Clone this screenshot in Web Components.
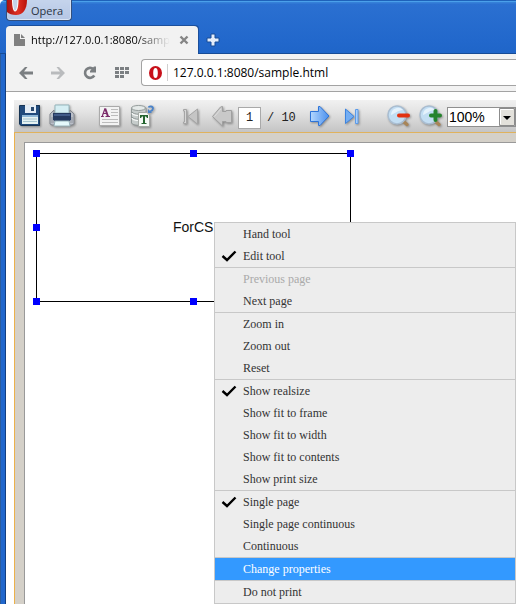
<!DOCTYPE html>
<html lang="en">
<head>
<meta charset="utf-8">
<title>sample.html</title>
<style>
html, body { margin: 0; height: 100%; }
body { font-family: "Open Sans", "Noto Sans", sans-serif; overflow: hidden; background: #fff; }
</style>
</head>
<body>
<browser-window></browser-window>

<template id="browser-window">
<style>
:host { display: flex; flex-direction: column; min-height: 100vh; box-sizing: border-box; position: relative; background: #fff; }
.top { background: linear-gradient(#1e62ba 0 1px, #4aa0ea 1px 2px, #3580d8 2px 3px, #2b70d1 4px, #2268cc 40px, #1f65c8); border-top-left-radius: 5px; }
.body { flex: 1; display: flex; }
.edge { width: 6px; flex: none; background: linear-gradient(90deg, #2b5c9c 0 1px, #2167cc 1px 5px, #123f82 5px); }
.main { flex: 1; min-width: 0; display: flex; flex-direction: column; }
report-viewer { flex: 1; margin: 8px 0 0 8px; }
</style>
<div class="top">
  <opera-button>Opera</opera-button>
  <tab-strip>http://127.0.0.1:8080/sample.html</tab-strip>
</div>
<div class="body">
  <div class="edge"></div>
  <div class="main">
    <address-bar value="127.0.0.1:8080/sample.html"></address-bar>
    <report-viewer></report-viewer>
  </div>
</div>
</template>

<template id="opera-button">
<style>
:host { display: flex; height: 26px; padding-left: 6px; align-items: flex-start; }
button { font: 11px/22px "Open Sans", "Noto Sans", sans-serif; color: #2a3342; height: 21px; padding: 0 8px 0 0; display: flex; gap: 4px; align-items: flex-start; margin: 0; border: 1px solid #33507e; border-top: 0; border-radius: 0 0 4px 4px; background: linear-gradient(#c5d4ec, #b5c6e4); box-shadow: inset 0 -1px #dce6f5, inset -1px 0 #d5e0f2; overflow: hidden; }
svg { display: block; }
</style>
<button type="button">
  <svg width="20" height="17" viewBox="0 0 20 17"><defs><linearGradient id="g" x1="0" x2="1"><stop offset="0" stop-color="#a81410"/><stop offset=".55" stop-color="#e03024"/><stop offset="1" stop-color="#b8120c"/></linearGradient></defs><path d="M0 0H20C20 9 16 15 9 15C5 15 2 14 0 12Z" fill="url(#g)"/><path d="M5 0C5 6 6 11.500 8 11.500C10.500 11.500 11.500 6 11.500 0Z" fill="#fff"/><path d="M6 0C6 6 7 10.500 8 10.500C9.500 10.500 10.500 6 10.500 0Z" fill="#c4d2e9"/></svg>
  <slot></slot>
</button>
</template>

<template id="tab-strip">
<style>
:host { display: flex; height: 27px; padding-left: 6px; border-bottom: 1px solid #164b96; align-items: stretch; }
.tab { display: flex; align-items: center; width: 192px; margin-bottom: -1px; background: #f2f2f2; border-radius: 4px 4px 0 0; box-shadow: 1px -1px #1b4f9c; box-sizing: border-box; padding-left: 8px; }
button { border: 0; background: none; padding: 0; margin: 0; display: flex; align-items: center; }
.label { font: 11px/20px "Open Sans", "Noto Sans", sans-serif; color: #000; flex: 1; min-width: 0; gap: 6px; }
.text { flex: 1; overflow: hidden; white-space: nowrap; text-align: left; -webkit-mask-image: linear-gradient(90deg, #000 75%, transparent); mask-image: linear-gradient(90deg, #000 75%, transparent); }
.close { width: 28px; justify-content: center; }
.add { margin-left: 8px; }
</style>
<div class="tab">
  <button type="button" class="label">
    <svg width="11" height="12" viewBox="0 0 11 12"><path d="M0 0H6V5H11V12H0Z" fill="#808080"/><path d="M7 0L11 4H7Z" fill="#808080"/></svg>
    <span class="text"><slot></slot></span>
  </button>
  <button type="button" class="close" aria-label="Close tab"><svg width="10" height="10" viewBox="0 0 10 10"><path d="M1.500 1.500L8.500 8.500M8.500 1.500L1.500 8.500" stroke="#858585" stroke-width="2.400"/></svg></button>
</div>
<button type="button" class="add" aria-label="New tab"><svg width="14" height="14" viewBox="0 0 14 14"><path d="M5 1H9V5H13V9H9V13H5V9H1V5H5Z" fill="#e4edfa" stroke="#174c98"/></svg></button>
</template>

<template id="address-bar">
<style>
:host { display: flex; height: 37px; background: #f2f2f2; border-bottom: 1px solid #a3a3a3; align-items: center; padding-left: 4px; }
button { border: 0; background: none; padding: 0; margin: 0; width: 32px; height: 32px; display: flex; align-items: center; justify-content: center; }
.field { flex: 1; min-width: 0; height: 25px; margin-left: 3px; border: 1px solid #a3a3a3; border-right: 0; border-radius: 4px 0 0 4px; background: #fff; display: flex; align-items: center; padding-left: 7px; gap: 5px; }
.rule { width: 1px; height: 17px; background: #cfcfcf; }
input { flex: 1; min-width: 0; border: 0; padding: 0; margin: 0; outline: 0; background: none; font: 12px/20px "Open Sans", "Noto Sans", sans-serif; color: #000; }
</style>
<button type="button" aria-label="Back"><svg width="14" height="12" viewBox="0 0 14 12"><path d="M6 0H8.500L5 4.500H14V7.500H5L8.500 12H6L0 6Z" fill="#7b7f82"/></svg></button>
<button type="button" aria-label="Forward"><svg width="14" height="12" viewBox="0 0 14 12"><path d="M8 0H5.500L9 4.500H0V7.500H9L5.500 12H8L14 6Z" fill="#b9bbbd"/></svg></button>
<button type="button" aria-label="Reload"><svg width="14" height="14" viewBox="0 0 14 14"><path d="M11.300 9.500A5 5 0 1 1 10.500 3.200" fill="none" stroke="#7b7f82" stroke-width="2.600"/><path d="M13 0.500V6.500H7V5L11 0.500Z" fill="#7b7f82"/></svg></button>
<button type="button" aria-label="Speed dial"><svg width="14" height="11" viewBox="0 0 14 11"><path d="M0 0h4v3h-4zM5 0h4v3h-4zM10 0h4v3h-4zM0 4h4v3h-4zM5 4h4v3h-4zM10 4h4v3h-4zM0 8h4v3h-4zM5 8h4v3h-4z" fill="#7b7f82"/></svg></button>
<div class="field">
  <svg width="13" height="14" viewBox="0 0 13 14"><ellipse cx="6.500" cy="7" rx="6.500" ry="7" fill="#c8101a"/><ellipse cx="6.500" cy="7" rx="2.300" ry="5" fill="#fff"/></svg>
  <span class="rule"></span>
  <input type="text" aria-label="Address">
</div>
</template>

<template id="tool-button">
<style>
:host { display: block; width: 32px; height: 32px; flex: none; }
button { display: block; width: 100%; height: 100%; padding: 0; margin: 0; border: 0; background: none; }
::slotted(svg) { display: block; filter: drop-shadow(1px 1px 1px rgba(0,0,0,.35)); }
</style>
<button type="button"><slot></slot></button>
</template>

<template id="report-viewer">
<style>
:host { display: flex; flex-direction: column; position: relative; }
.bar { display: flex; height: 32px; align-items: center; background: linear-gradient(#f1f1f1, #e4e4e4 35%, #c4c4c4); border-bottom: 1px solid #e0b25c; overflow: hidden; }
.group { display: flex; align-items: center; margin-right: 16px; }
.group:last-child { margin-right: 0; flex: 1; }
.desk { flex: 1; display: flex; background: #d4d0c8; border-left: 1px solid #ecb14a; padding: 9px 0 0 9px; }
design-page { flex: 1; }
context-menu { position: absolute; top: 122px; left: 200px; right: 0; }
</style>
<div class="bar">
  <div class="group">
    <tool-button label="Save"><svg width="32" height="32" viewBox="0 0 32 32"><path d="M6 5H25Q26 5 26 6V26H7L5 24V6Q5 5 6 5Z" fill="#204a7c"/><path d="M5.500 6V24L7.500 25.500H25.500V5.500H6Z" fill="none" stroke="#163454"/><path d="M11 5H22V13H11Z" fill="#e3ecf5"/><path d="M17 7H20V11H17Z" fill="#27486f"/><path d="M8 15H24V24H8Z" fill="#e5f2f2"/><path d="M8 15H24V17H8Z" fill="#8eb8d8"/><path d="M9 19H23M9 21.500H23" stroke="#a6c4cf"/></svg></tool-button>
    <tool-button label="Print"><svg width="32" height="32" viewBox="0 0 32 32"><path d="M9 5H23V13H9Z" fill="#d5eef3" stroke="#95b5bc"/><path d="M8 10L4 14V24L6 25H26L28 24V14L24 10V14H8Z" fill="#b9bec7" stroke="#83878e"/><path d="M7 13H25V20L23 21H9L7 20Z" fill="#25395f"/><path d="M8 14H24V16H8Z" fill="#425b88"/><path d="M5 17H7V21H9L10 22H22L23 21H25V17H27V23H5Z" fill="#a5aab3"/><path d="M9 21H23L24 26H8Z" fill="#e5f9fb" stroke="#9ab5bc"/></svg></tool-button>
  </div>
  <div class="group">
    <tool-button label="Text properties"><svg width="32" height="32" viewBox="0 0 32 32"><path d="M5.500 6.500H25.500V25.500H5.500Z" fill="#f3f3f3" stroke="#aaa"/><path d="M17 9.500H24M17 12.500H24M17 15.500H24M8 19.500H24M8 22.500H24" stroke="#bcbcbc"/><path d="M11 8.500L8.300 16M9 13.500H13M7 16.500H9.800M11.500 16.500H16" fill="none" stroke="#7c2c6a" stroke-width="1.200"/><path d="M11.200 8.500L14 16.500" stroke="#7c2c6a" stroke-width="2"/></svg></tool-button>
    <tool-button label="Data text"><svg width="32" height="32" viewBox="0 0 32 32"><path d="M5.500 8V23C7 26 17 26 20 23V8Z" fill="#c6cccb" stroke="#909897"/><ellipse cx="12.500" cy="8" rx="7" ry="2.500" fill="#e5eae9" stroke="#959d9c"/><path d="M6 13C8 16 17 16 20 13M6 18C8 21 17 21 20 18" fill="none" stroke="#f4f6f5" stroke-width="1.500"/><path d="M6 12C8 15 17 15 20 12M6 17C8 20 17 20 20 17" fill="none" stroke="#8e9695"/><path d="M12.500 12.500H21L23.500 15V26.500H12.500Z" fill="#f5f8f5" stroke="#a5aaa6"/><path d="M14 15H22V18H21L20 16.500H19V23H20.500V24H15.500V23H17V16.500H16L15 18H14Z" fill="#24652f"/><path d="M22.500 7.500C23 6 27 6 27 8.500C27 10.500 25 11 24 11.500" fill="none" stroke="#4b83c9" stroke-width="1.800"/><path d="M22 9V13H26Z" fill="#4b83c9"/></svg></tool-button>
  </div>
  <div class="group">
    <tool-button label="First page"><svg width="32" height="32" viewBox="0 0 32 32"><path d="M9.500 9.500H12.500V23.500H9.500V22H10.500V11H9.500Z" fill="#d7d7d7" stroke="#a5a5a5"/><path d="M23.500 9V24L14 16.500Z" fill="#c5c5c5" stroke="#a5a5a5"/></svg></tool-button>
    <tool-button label="Previous page"><svg width="32" height="32" viewBox="0 0 32 32"><path d="M16.500 6.500V11.500H20V10.500H25.500V22.500H20V21.500H16.500V26L6.500 16.500L14.500 7Z" fill="#c9c9c9" stroke="#a0a0a0"/><path d="M15 9L8.500 16.500" stroke="#ddd"/></svg></tool-button>
    <page-counter></page-counter>
    <tool-button label="Next page"><svg width="32" height="32" viewBox="0 0 32 32"><defs><linearGradient id="n" x1="0" x2="1"><stop offset="0" stop-color="#b4d7fd"/><stop offset="1" stop-color="#4b90ee"/></linearGradient></defs><path d="M14.500 6.500H16L25 16L16 25.500H14.500V21.500H6.500V11.500H14.500Z" fill="url(#n)" stroke="#2e74d8"/></svg></tool-button>
    <tool-button label="Last page"><svg width="32" height="32" viewBox="0 0 32 32"><path d="M9.500 9L18 16.500L9.500 23.500Z" fill="#74aef3" stroke="#3d84df"/><path d="M19.500 9.500H22V23.500H19.500Z" fill="#a9d0fb" stroke="#5b9bea"/></svg></tool-button>
  </div>
  <div class="group">
    <tool-button label="Zoom out"><svg width="32" height="32" viewBox="0 0 32 32"><path d="M20 22L23 24.500" stroke="#a88558" stroke-width="3.500" stroke-linecap="round"/><circle cx="13" cy="15" r="9" fill="#c3def3" stroke="#a9bdd1" stroke-width="1.500"/><path d="M7 15A7 7 0 0 1 19 10C14 10 10 14 7 15Z" fill="#e5f2fc"/><path d="M15 15.500H24" stroke="#e23110" stroke-width="4" stroke-linecap="round"/></svg></tool-button>
    <tool-button label="Zoom in"><svg width="32" height="32" viewBox="0 0 32 32"><path d="M20 22L23 24.500" stroke="#a88558" stroke-width="3.500" stroke-linecap="round"/><circle cx="13" cy="15" r="9" fill="#c3def3" stroke="#a9bdd1" stroke-width="1.500"/><path d="M7 15A7 7 0 0 1 19 10C14 10 10 14 7 15Z" fill="#e5f2fc"/><path d="M19.500 11V20M15 15.500H24" stroke="#25832c" stroke-width="4" stroke-linecap="round"/></svg></tool-button>
    <zoom-select></zoom-select>
  </div>
</div>
<div class="desk"><design-page></design-page></div>
<context-menu>
  <menu-group><menu-item>Hand tool</menu-item><menu-item checked>Edit tool</menu-item></menu-group>
  <menu-group><menu-item disabled>Previous page</menu-item><menu-item>Next page</menu-item></menu-group>
  <menu-group><menu-item>Zoom in</menu-item><menu-item>Zoom out</menu-item><menu-item>Reset</menu-item></menu-group>
  <menu-group><menu-item checked>Show realsize</menu-item><menu-item>Show fit to frame</menu-item><menu-item>Show fit to width</menu-item><menu-item>Show fit to contents</menu-item><menu-item>Show print size</menu-item></menu-group>
  <menu-group><menu-item checked>Single page</menu-item><menu-item>Single page continuous</menu-item><menu-item>Continuous</menu-item></menu-group>
  <menu-group><menu-item active>Change properties</menu-item></menu-group>
  <menu-group><menu-item>Do not print</menu-item></menu-group>
</context-menu>
</template>

<template id="page-counter">
<style>
:host { display: flex; align-items: center; width: 66px; gap: 6px; padding-top: 4px; font: 12px/20px "Liberation Mono", monospace; color: #222; white-space: pre; }
input { width: 23px; height: 22px; box-sizing: border-box; margin: 0; padding: 0; border: 1px solid #a9a9a9; background: #fff; text-align: center; font: inherit; color: #222; }
</style>
<input type="text" value="1" aria-label="Page"><span>/ 10</span>
</template>

<template id="zoom-select">
<style>
:host { display: grid; flex: 1; min-width: 69px; max-width: 69px; height: 20px; margin: 2px 0 0 -1px; border: 1px solid #8f8f8f; box-sizing: border-box; background: #fff; }
select, svg { grid-area: 1 / 1; }
select { appearance: none; width: 100%; height: 18px; margin: 0; padding: 0 0 0 1px; border: 0; border-radius: 0; background: none; font: 14px/18px "Liberation Sans", Arial, sans-serif; color: #000; }
svg { justify-self: end; pointer-events: none; }
</style>
<select aria-label="Zoom"><option>100%</option><option>200%</option></select>
<svg width="16" height="18" viewBox="0 0 16 18"><path d="M.5.500H15.500V17.500H.5Z" fill="#e3e1db" stroke="#8c8c8c"/><path d="M1.500 16V1.500H14" fill="none" stroke="#fff"/><path d="M4 8H12L8 12Z" fill="#000"/></svg>
</template>

<template id="design-page">
<style>
:host { display: block; position: relative; background: #fff; border: solid #999; border-width: 1px 0 0 1px; }
.box { position: absolute; left: 11px; top: 10px; width: 313px; height: 147px; border: 1px solid #000; }
.text { position: absolute; left: 136px; top: 63px; font: 14px/20px "Liberation Sans", Arial, sans-serif; color: #111; }
.handles { position: absolute; inset: -4px; display: grid; grid-template-columns: repeat(3, 7px); grid-template-rows: repeat(3, 7px); justify-content: space-between; align-content: space-between; }
i { background: #00f; }
.middle { visibility: hidden; }
</style>
<div class="box">
  <span class="text">ForCS</span>
  <div class="handles"><i></i><i></i><i></i><i></i><i class="middle"></i><i></i><i></i><i></i><i></i></div>
</div>
</template>

<template id="context-menu">
<style>
:host { display: block; border: solid #c8c8c8; border-width: 1px 1px 0 1px; background: #ededed; }
</style>
<div role="menu"><slot></slot></div>
</template>

<template id="menu-group">
<style>:host { display: block; border-bottom: 1px solid #c8c8c8; }</style>
<div role="group"><slot></slot></div>
</template>

<template id="menu-item">
<style>
:host { display: block; }
button { display: grid; grid-template-columns: 22px 1fr; align-items: center; width: 100%; height: 22px; margin: 0; padding: 0 0 0 6px; border: 0; background: none; text-align: left; font: 12px/22px "Liberation Serif", "Times New Roman", serif; color: #333; }
svg { display: block; visibility: hidden; }
:host([checked]) svg { visibility: visible; }
:host([disabled]) button { color: #aaa; }
:host([active]) button { background: #3399ff; color: #fff; }
</style>
<button type="button" role="menuitem"><svg width="16" height="12" viewBox="0 0 16 12"><path d="M1.500 6L6 10L14.500 1.500" fill="none" stroke="#000" stroke-width="2.400"/></svg><span><slot></slot></span></button>
</template>

<script>
class TemplateElement extends HTMLElement {
  constructor() {
    super();
    this.attachShadow({ mode: "open" }).append(document.getElementById(this.localName).content.cloneNode(true));
  }
}
const define = (name, base = class extends TemplateElement {}) => customElements.define(name, base);

define("menu-item", class extends TemplateElement {
  connectedCallback() {
    const button = this.shadowRoot.querySelector("button");
    button.disabled = this.hasAttribute("disabled");
    if (this.hasAttribute("checked")) {
      button.setAttribute("role", "menuitemcheckbox");
      button.setAttribute("aria-checked", "true");
    }
  }
});
define("tool-button", class extends TemplateElement {
  connectedCallback() {
    this.shadowRoot.querySelector("button").setAttribute("aria-label", this.getAttribute("label"));
  }
});
define("address-bar", class extends TemplateElement {
  connectedCallback() {
    this.shadowRoot.querySelector("input").value = this.getAttribute("value");
  }
});
["menu-group", "context-menu", "design-page", "zoom-select", "page-counter", "report-viewer", "tab-strip", "opera-button", "browser-window"].forEach(name => define(name));
</script>
</body>
</html>
